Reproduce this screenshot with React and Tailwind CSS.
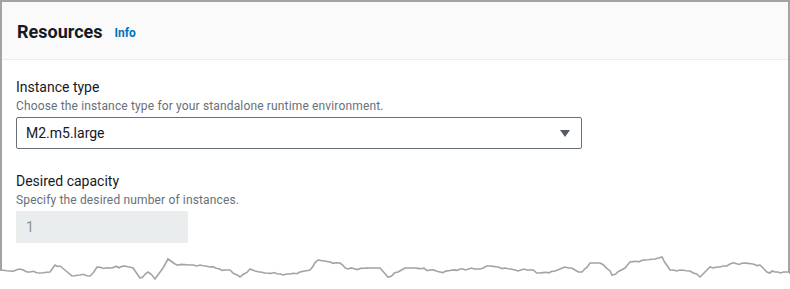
export default function App() {
  const base = [
    [0,270],[10,271],[20,269],[30,272],[40,273],[50,272],[55,265],[60,266],[65,270],[72,276],[80,275],[90,276],[97,267],[110,268],[125,266],[133,268],[140,278],[148,272],[155,279],[163,268],[168,259],[175,264],[190,265],[200,265],[210,267],[225,270],[230,270],[240,277],[250,269],[255,271],[265,273],[280,274],[290,274],[300,272],
    [310,270],[318,260],[330,262],[340,263],[348,269],[370,268],[380,268],[388,277],[398,272],[405,268],[415,268],[430,270],[440,272],[460,269],[480,269],[490,266],[505,268],[515,270],[530,270],[540,273],[555,271],[565,267],[575,270],[582,272],[590,263],[600,263],[610,271],[612,275],[625,268],[630,262],[645,260],[655,259],[662,257],[670,270],[680,270],[690,271],[700,277],[710,267],[720,267],[730,264],[745,263],[760,265],[767,272],[775,272],[789,272]
  ];
  const pts = [];
  for (let i = 0; i < base.length - 1; i++) {
    const [x0, y0] = base[i];
    const [x1, y1] = base[i + 1];
    const steps = Math.max(1, Math.round((x1 - x0) / 3));
    for (let s = 0; s < steps; s++) {
      const t = s / steps;
      const j = ((i * 7 + s * 13) % 5 === 0) ? 1 : ((i * 3 + s * 5) % 7 === 0 ? -1 : 0);
      pts.push([x0 + (x1 - x0) * t, y0 + (y1 - y0) * t + (s === 0 ? 0 : j)]);
    }
  }
  pts.push(base[base.length - 1]);
  const line = pts.map(p => p[0].toFixed(1) + "," + p[1].toFixed(1)).join(" ");
  const fill = line + " 790,289 0,289";
  return (
    <div className="relative w-[790px] h-[289px] bg-white overflow-hidden" style={{ fontFamily: 'Roboto, "Noto Sans", sans-serif' }}>
      <div className="h-[274px] border-t-2 border-x-2 border-[#a3a3a3] flex flex-col">
        <div className="h-[58px] bg-[#fafafa] border-b border-[#eaeded] flex items-center pl-[15px] pt-[2px]">
          <span className="text-[18px] font-bold text-[#16191f] leading-none">Resources</span>
          <span className="ml-[12px] text-[12px] font-bold text-[#0073bb] leading-none pt-[3px]">Info</span>
        </div>
        <div className="px-[14px] pt-[17px] flex flex-col">
          <div className="text-[14px] leading-[20px] text-[#16191f]">Instance type</div>
          <div className="text-[12px] leading-[16px] mt-[1px] tracking-[0.15px] text-[#687078]">Choose the instance type for your standalone runtime environment.</div>
          <div className="mt-[3px] w-[566px] h-[32px] border border-[#687078] rounded-[2px] flex items-center justify-between pl-[9px] pr-[11px]">
            <span className="text-[14px] text-[#16191f]">M2.m5.large</span>
            <svg width="10" height="7" viewBox="0 0 10 7"><polygon points="0,0 10,0 5,7" fill="#545b64" /></svg>
          </div>
          <div className="mt-[22px] text-[14px] leading-[20px] text-[#16191f]">Desired capacity</div>
          <div className="text-[12px] leading-[16px] mt-[1px] tracking-[0.15px] text-[#687078]">Specify the desired number of instances.</div>
          <div className="mt-[3px] w-[172px] h-[32px] bg-[#eaeded] rounded-[2px] flex items-center pl-[10px]">
            <span className="text-[14px] text-[#879596]">1</span>
          </div>
        </div>
      </div>
      <svg className="absolute left-0 top-0" width="790" height="289" viewBox="0 0 790 289">
        <polygon points={fill} fill="#ffffff" />
        <polyline points={line} fill="none" stroke="#a3a3a3" strokeWidth="1.6" strokeLinejoin="miter" />
      </svg>
    </div>
  );
}
